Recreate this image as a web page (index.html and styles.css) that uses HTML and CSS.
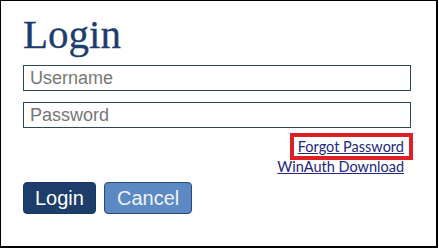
FILE: index.html
```html
<!DOCTYPE html>
<html>
<head>
<meta charset="utf-8">
<link rel="stylesheet" href="styles.css">
</head>
<body>
<div class="frame">
  <h1 class="title">Login</h1>
  <form class="form">
    <input class="field" type="text" placeholder="Username">
    <input class="field" type="password" placeholder="Password">
    <div class="links">
      <span class="highlight"><a href="#" class="link">Forgot Password</a></span>
      <a href="#" class="link">WinAuth Download</a>
    </div>
    <div class="buttons">
      <button type="button" class="btn btn-primary">Login</button>
      <button type="button" class="btn btn-secondary">Cancel</button>
    </div>
  </form>
</div>
</body>
</html>
```
FILE: styles.css
```css
html, body {
  margin: 0;
  padding: 0;
  background: #fff;
}
.frame {
  box-sizing: border-box;
  width: 438px;
  height: 248px;
  border-top: 1px solid #000;
  border-left: 1px solid #000;
  border-right: 2px solid #000;
  border-bottom: 2px solid #000;
  padding: 11px 0 0 22px;
}
.title {
  margin: 0;
  font-family: "Liberation Serif", serif;
  font-weight: normal;
  font-size: 41px;
  line-height: 44px;
  color: #1c3d6e;
  -webkit-text-stroke: 0.3px #1c3d6e;
}
.form {
  display: flex;
  flex-direction: column;
  margin-top: 9px;
  width: 388px;
}
.field {
  box-sizing: border-box;
  width: 388px;
  height: 26px;
  margin: 0 0 11px 0;
  padding: 0 6px;
  border: 1px solid #2e4a50;
  border-radius: 0;
  font-family: "Liberation Sans", Arial, sans-serif;
  font-size: 18px;
  color: #333;
  background: #fff;
  outline: none;
}
.field::placeholder {
  color: #767676;
}
.links {
  display: flex;
  flex-direction: column;
  align-items: flex-end;
  margin-top: -1px;
  padding-right: 7px;
  font-family: Lato, "Liberation Sans", sans-serif;
  font-size: 14.5px;
  line-height: 19px;
}
.link {
  color: #22267e;
  text-decoration: underline;
}
.highlight {
  display: inline-block;
  padding: 1px 5px 1px 4px;
  margin: -1px -5px 0 0;
  outline: 4px solid #dd1f26;
  outline-offset: 0;
  line-height: 17px;
  margin-bottom: 1px;
}
.buttons {
  display: flex;
  gap: 8px;
  margin-top: 6px;
}
.btn {
  box-sizing: border-box;
  height: 32px;
  padding: 0 12px;
  border-radius: 4px;
  font-family: "Liberation Sans", Arial, sans-serif;
  font-size: 20px;
  line-height: 30px;
  cursor: pointer;
}
.btn-primary {
  background: #1d3d6b;
  border: 1px solid #1a3762;
  color: #fff;
  padding: 0 11px;
}
.btn-secondary {
  background: #5c88c3;
  border: 1px solid #2c4b78;
  color: #eef3fa;
}
```
